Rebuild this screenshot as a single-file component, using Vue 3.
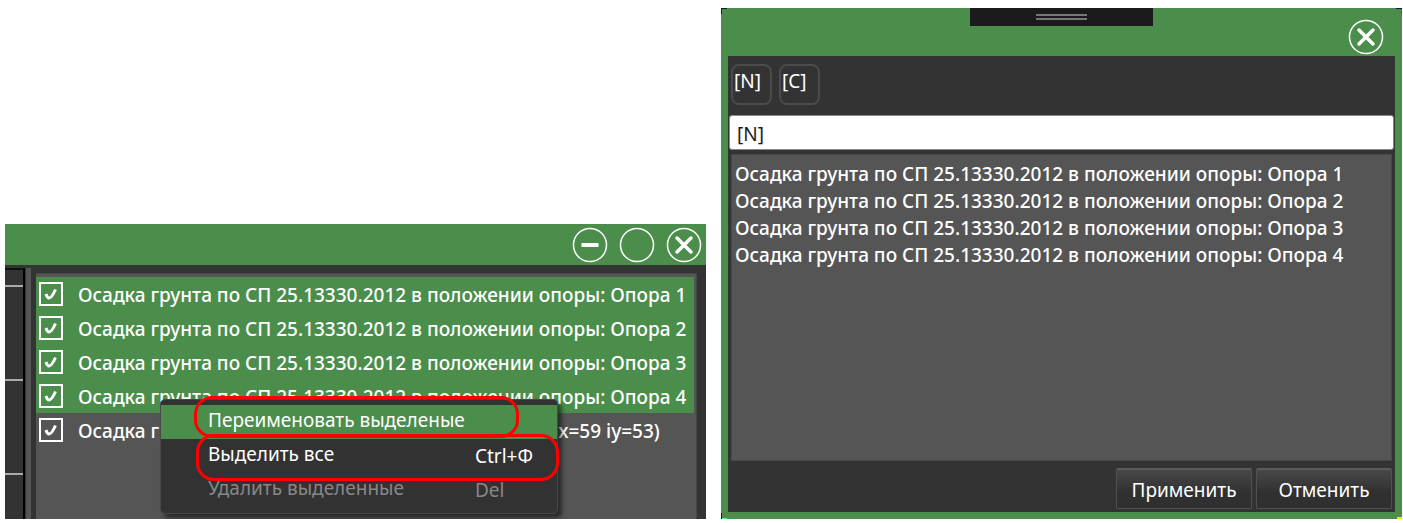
<template>
  <main class="workspace">
    <section class="window">
      <header class="title-bar">
        <button class="round-button" type="button" aria-label="Свернуть">
          <svg viewBox="0 0 36 36">
            <circle cx="18" cy="18" r="16.5" />
            <path class="thick" d="M9.500 18H26.500" />
          </svg>
        </button>
        <button class="round-button" type="button" aria-label="Развернуть">
          <svg viewBox="0 0 36 36">
            <circle cx="18" cy="18" r="16.5" />
          </svg>
        </button>
        <button class="round-button" type="button" aria-label="Закрыть">
          <svg viewBox="0 0 36 36">
            <circle cx="18" cy="18" r="16.5" />
            <path class="thick cross" d="M11 11L25 25M25 11L11 25" />
          </svg>
        </button>
      </header>

      <div class="window-body">
        <div class="side-column">
          <div class="side-cell side-head"></div>
          <div class="side-cell"></div>
          <div class="side-cell"></div>
          <div class="side-cell side-rest"></div>
        </div>
        <div class="splitter"></div>
        <div class="results">
          <label
            v-for="row in rows"
            :key="row.id"
            :class="['result', { selected: row.selected }]"
          >
            <span class="check">
              <input v-model="row.checked" type="checkbox" />
              <svg v-if="row.checked" viewBox="0 0 24 24">
                <path d="M7 12C8 15 9 16 10 16C12 16 14.500 12 16.500 7.500" />
              </svg>
            </span>
            <span class="result-name">{{ row.name }}</span>
          </label>
        </div>
      </div>

      <div class="context-menu" role="menu">
        <button
          v-for="item in menuItems"
          :key="item.label"
          :class="['menu-item', { active: item.active }]"
          :disabled="item.disabled"
          type="button"
          role="menuitem"
        >
          <span>{{ item.label }}</span>
          <span class="shortcut">{{ item.shortcut }}</span>
        </button>
        <span class="mark mark-rename"></span>
        <span class="mark mark-select"></span>
      </div>
    </section>

    <section class="dialog">
      <header class="dialog-header">
        <div class="grip"></div>
        <button class="round-button" type="button" aria-label="Закрыть">
          <svg viewBox="0 0 36 36">
            <circle cx="18" cy="18" r="16.5" />
            <path class="thick cross" d="M11 11L25 25M25 11L11 25" />
          </svg>
        </button>
      </header>
      <div class="dialog-body">
        <div class="tokens">
          <button v-for="token in tokens" :key="token" class="token" type="button">
            {{ token }}
          </button>
        </div>
        <input v-model="pattern" class="pattern" type="text" aria-label="Шаблон имени" />
        <ul class="preview">
          <li v-for="name in previewNames" :key="name">{{ name }}</li>
        </ul>
        <footer class="actions">
          <button class="action" type="button">Применить</button>
          <button class="action" type="button">Отменить</button>
        </footer>
      </div>
    </section>
  </main>
</template>

<script setup>
import { computed, ref } from "vue";

const prefix = "Осадка грунта по СП 25.13330.2012 в";

const rows = ref([
  { id: 1, name: `${prefix} положении опоры: Опора 1`, selected: true, checked: true },
  { id: 2, name: `${prefix} положении опоры: Опора 2`, selected: true, checked: true },
  { id: 3, name: `${prefix} положении опоры: Опора 3`, selected: true, checked: true },
  { id: 4, name: `${prefix} положении опоры: Опора 4`, selected: true, checked: true },
  { id: 5, name: `${prefix} координатах (x=59 iy=53)`, selected: false, checked: true },
]);

const menuItems = [
  { label: "Переименовать выделеные", shortcut: "", active: true },
  { label: "Выделить все", shortcut: "Ctrl+Ф" },
  { label: "Удалить выделенные", shortcut: "Del", disabled: true },
];

const tokens = ["[N]", "[C]"];
const pattern = ref("[N]");

const previewNames = computed(() =>
  rows.value
    .filter((row) => row.selected)
    .map((row) => pattern.value.replaceAll("[N]", row.name))
);
</script>

<style>
body {
  margin: 0;
  background: #fff;
}
</style>

<style scoped>
.workspace {
  display: grid;
  grid-template-columns: 701fr 681fr;
  align-items: end;
  gap: 15px;
  padding: 8px 1px 4px 5px;
  font-family: "Noto Sans", "Open Sans", sans-serif;
  font-size: 19px;
  line-height: 27px;
  color: #fff;
}

button,
input {
  margin: 0;
  font: inherit;
  color: inherit;
  box-sizing: border-box;
}

.window {
  position: relative;
  min-width: 0;
  overflow: hidden;
  background: #333;
}

.title-bar {
  display: flex;
  justify-content: flex-end;
  align-items: center;
  gap: 11px;
  height: 41px;
  padding-right: 4px;
  background: #4b8d4b;
}

.round-button {
  width: 36px;
  height: 36px;
  padding: 0;
  border: none;
  background: none;
  cursor: pointer;
}

.round-button svg {
  display: block;
  fill: none;
  stroke: #fff;
  stroke-width: 1.5;
}

.round-button .thick {
  stroke-width: 4;
}

.round-button .cross {
  stroke-linecap: round;
  stroke-width: 3.5;
}

.window-body {
  display: flex;
  min-height: 254px;
}

.side-column {
  display: flex;
  flex-direction: column;
  width: 18px;
  margin-top: 3px;
  border-top: 2px solid #111;
  border-right: 2px solid #000;
}

.side-cell {
  height: 92px;
  border-bottom: 2px solid #aaa;
}

.side-head {
  height: 15px;
}

.side-rest {
  flex: 1;
  height: auto;
  border: none;
}

.splitter {
  width: 5px;
  margin: 3px 5px 0 1px;
  background: #555;
}

.results {
  flex: 1;
  min-width: 0;
  margin: 8px 9px 0 0;
  padding: 4px 3px 0 0;
  box-shadow: inset 0 1px #484848, inset -1px 0 #484848;
  background: #555;
  font-weight: 500;
}

.result {
  display: flex;
  align-items: center;
  gap: 15px;
  height: 34px;
  padding-left: 3px;
  white-space: nowrap;
}

.result.selected {
  background: #4b8d4b;
}

.result-name {
  padding-top: 2px;
}

.check {
  display: grid;
}

.check input,
.check svg {
  grid-area: 1 / 1;
  width: 24px;
  height: 24px;
}

.check input {
  appearance: none;
  border: 2px solid #fff;
}

.check svg {
  fill: none;
  stroke: #fff;
  stroke-width: 3;
  pointer-events: none;
}

.context-menu {
  position: absolute;
  top: 175px;
  left: 155px;
  width: 398px;
  box-sizing: border-box;
  padding: 5px 0 6px;
  border: 1px solid #484848;
  border-radius: 5px;
  background: #323232;
  box-shadow: 4px 4px 4px rgba(0, 0, 0, 0.5);
}

.menu-item {
  display: grid;
  grid-template-columns: 1fr 82px;
  align-items: center;
  width: 100%;
  height: 34px;
  padding: 0 0 4px 47px;
  border: none;
  background: none;
  text-align: left;
  white-space: nowrap;
}

.menu-item.active {
  background: #4b8d4b;
}

.menu-item:disabled {
  color: #878787;
}

.shortcut {
  padding-top: 4px;
}

.mark {
  position: absolute;
  box-sizing: border-box;
  border: 3px solid #f00;
  border-radius: 18px;
  pointer-events: none;
}

.mark-rename {
  top: -4px;
  left: 33px;
  width: 325px;
  height: 42px;
}

.mark-select {
  top: 34px;
  left: 35px;
  width: 363px;
  height: 47px;
}

.dialog {
  min-width: 0;
  box-sizing: border-box;
  padding: 0 7px 7px;
  background:
    linear-gradient(#04203a, #04203a) 0 0 / 6px 1px no-repeat,
    linear-gradient(#04203a, #04203a) 0 0 / 1px 6px no-repeat,
    linear-gradient(#04204a, #04204a) 100% 0 / 6px 1px no-repeat,
    linear-gradient(#0060ff, #0060ff) 100% 1px / 1px 5px no-repeat,
    linear-gradient(#04203a, #04203a) 0 100% / 1px 6px no-repeat,
    linear-gradient(#4df0a0, #4df0a0) 1px 100% / 5px 1px no-repeat,
    linear-gradient(#f0f000, #f0f000) 100% 100% / 5px 2px no-repeat,
    #4b8d4b;
}

.dialog-header {
  display: grid;
  grid-template-columns: 1fr 183px 1fr;
  height: 48px;
}

.grip {
  grid-column: 2;
  display: flex;
  justify-content: center;
  height: 18px;
  background: #1b1b1b;
}

.grip::after {
  content: "";
  width: 51px;
  height: 2px;
  margin-top: 6px;
  border: solid #777;
  border-width: 2px 0;
}

.dialog-header .round-button {
  justify-self: end;
  margin: 11px 11px 0 0;
}

.dialog-body {
  padding: 8px 3px 3px;
  background: #333;
}

.tokens {
  display: flex;
  gap: 7px;
}

.token {
  display: flex;
  width: 41px;
  height: 41px;
  padding: 2px 0 0 1px;
  border: 2px solid #4b4b4b;
  border-radius: 8px;
  background: none;
}

.pattern {
  display: block;
  width: calc(100% + 4px);
  height: 35px;
  margin: 10px -2px 4px;
  padding: 2px 7px 0;
  border: 1px solid #888;
  border-radius: 3px;
  background: #fff;
  color: #1a1a1a;
}

.preview {
  min-height: 307px;
  box-sizing: border-box;
  margin: 0;
  padding: 6px 3px;
  border: 1px solid #484848;
  list-style: none;
  white-space: nowrap;
  background: #555;
  font-weight: 500;
}

.actions {
  display: flex;
  justify-content: flex-end;
  gap: 4px;
  margin-top: 7px;
}

.action {
  width: 136px;
  height: 41px;
  padding: 2px 0 0;
  border: 1px solid #505050;
  border-top: 2px solid #5a5a5a;
  border-radius: 2px;
  background: linear-gradient(#484848, #303030 60%);
}
</style>
